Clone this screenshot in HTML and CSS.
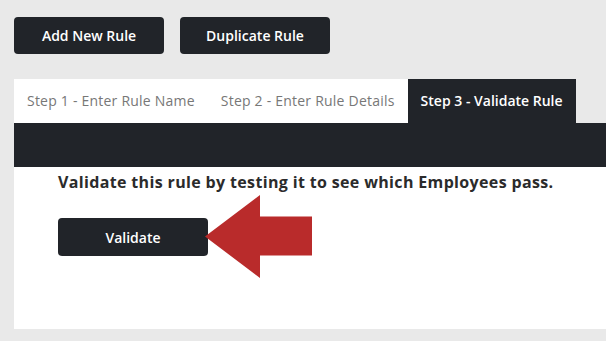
FILE: index.html
```html
<!DOCTYPE html>
<html lang="en">
<head>
    <meta charset="UTF-8">
    <meta name="viewport" content="width=device-width, initial-scale=1.0">
    <title>Rules</title>
    <link rel="stylesheet" href="styles.css">
</head>
<body>
    <div class="actions">
        <button class="btn">Add New Rule</button>
        <button class="btn">Duplicate Rule</button>
    </div>

    <div class="wizard">
        <ul class="tabs">
            <li class="tab">Step 1 - Enter Rule Name</li>
            <li class="tab">Step 2 - Enter Rule Details</li>
            <li class="tab active">Step 3 - Validate Rule</li>
        </ul>
        <div class="band"></div>
        <div class="panel">
            <p class="intro">Validate this rule by testing it to see which Employees pass.</p>
            <div class="validate-row">
                <button class="btn">Validate</button>
                <!-- arrow pointing at the button -->
                <svg class="arrow" width="108" height="84" viewBox="0 0 108 84">
                    <polygon points="0,41.5 55,0 55,21.5 107,21.5 107,60.5 55,60.5 55,83" fill="#b92b2b"/>
                </svg>
            </div>
        </div>
    </div>
</body>
</html>
```

FILE: styles.css
```css
body {
    font-family: "Open Sans", Lato, sans-serif;
    background-color: #e9e9e9;
    margin: 0;
    padding: 17px 0 0 14px;
}
.actions {
    display: flex;
    gap: 16px;
}
.btn {
    width: 150px;
    height: 37px;
    border: none;
    border-radius: 4px;
    background-color: #212429;
    color: #fff;
    font-family: inherit;
    font-size: 14px;
    font-weight: 600;
    cursor: pointer;
}
.wizard {
    margin-top: 25px;
}
.tabs {
    list-style: none;
    margin: 0;
    padding: 0;
    display: flex;
}
.tab {
    height: 44px;
    line-height: 44px;
    padding: 0 13px;
    background-color: #fff;
    color: #777;
    font-size: 14px;
    letter-spacing: 0.22px;
}
.tab.active {
    background-color: #212429;
    color: #fff;
    font-weight: 600;
    letter-spacing: 0;
}
.band {
    height: 44px;
    background-color: #212429;
}
.panel {
    background-color: #fff;
    height: 162px;
    padding: 0 0 0 44px;
}
.intro {
    margin: 0;
    padding-top: 3px;
    line-height: 24px;
    font-size: 16px;
    font-weight: 700;
    letter-spacing: 0.35px;
    color: #2b2b2b;
}
.validate-row {
    display: flex;
    align-items: center;
    margin-top: 1px;
}
.validate-row .btn {
    height: 38px;
}
.arrow {
    margin-left: -3px;
    display: block;
}
```
